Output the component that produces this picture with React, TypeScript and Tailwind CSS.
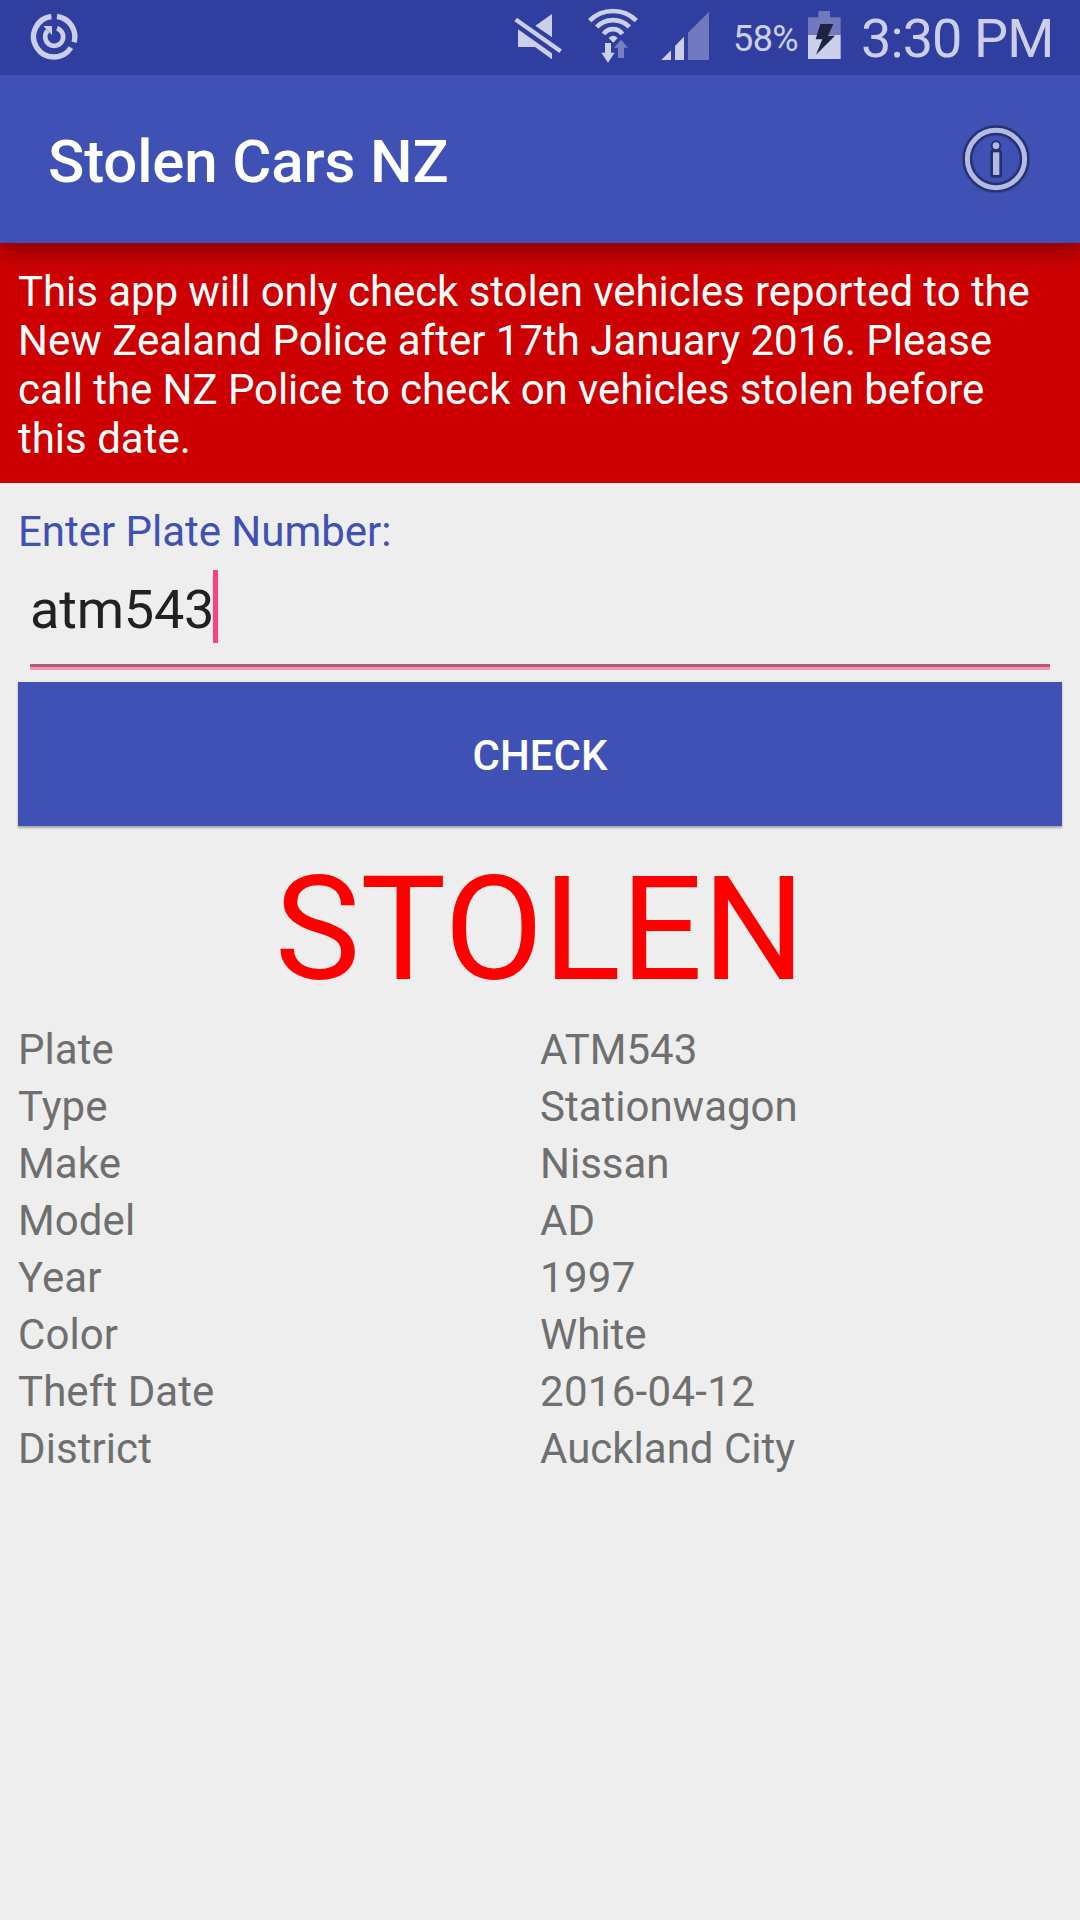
const rows = [
  ['Plate', 'ATM543'],
  ['Type', 'Stationwagon'],
  ['Make', 'Nissan'],
  ['Model', 'AD'],
  ['Year', '1997'],
  ['Color', 'White'],
  ['Theft Date', '2016-04-12'],
  ['District', 'Auckland City'],
];

function SyncIcon() {
  return (
    <svg className="ml-[30px] h-[75px] w-[48px]" viewBox="90 0 144 225" fill="none" stroke="currentColor">
      <path d="M171 49.5A61 61 0 0 1 222 127M213 143A61 61 0 1 1 154 49.5" strokeWidth="16" />
      <path d="M171 85A27 27 0 1 1 143 92" strokeWidth="14" />
      <path d="M130 78H156V105Z" fill="currentColor" stroke="none" />
    </svg>
  );
}

function MuteIcon() {
  return (
    <svg className="ml-[436px] h-[75px] w-[49px]" viewBox="42 0 147 225" fill="currentColor">
      <path d="M54 88 156 160V178L105 141H54ZM106 77 156 42V112Z" />
      <path d="M47 58.5 182 153.5" stroke="currentColor" strokeWidth="13" />
    </svg>
  );
}

function WifiIcon() {
  return (
    <svg className="ml-[25px] h-[75px] w-[50px]" viewBox="264 0 150 225" fill="currentColor">
      <g fill="none" stroke="currentColor" strokeWidth="14">
        <path d="M269 62A99 99 0 0 1 409 62" />
        <path d="M290 81A68 68 0 0 1 388 81" />
        <path d="M311 102A34 34 0 0 1 367 102" />
      </g>
      <path d="M326 114Q339 101 353 114L340 128Z" />
      <path d="M315 129H333V158H344L324 188 304 158H315Z" />
      <path d="M354 174V143H342L363 119 384 143H372V174Z" fill="#7880be" />
    </svg>
  );
}

function SignalIcon() {
  return (
    <svg className="ml-[23px] h-[75px] w-[49px]" viewBox="483 0 147 225" fill="currentColor">
      <path d="M484 180 513 151V180ZM525 180V138L552 110V180Z" />
      <path d="M564 180V98L627 35V180Z" fill="#6f79bb" />
    </svg>
  );
}

function BatteryIcon() {
  return (
    <svg className="h-[75px] w-[33px] shrink-0" viewBox="294 0 99 225" fill="currentColor">
      <path d="M325 33H360V52H392V105H294V52H325Z" fill="#7079bb" />
      <path d="M294 105H392V177H294Z" />
      <path d="M331 72H370L354 107H375L318 164 337 118H317Z" fill="#1b2440" />
    </svg>
  );
}

function StatusBar() {
  return (
    <div className="z-20 flex h-[75px] shrink-0 items-center bg-[#303f9f] text-[#cbcfe9]">
      <SyncIcon />
      <MuteIcon />
      <WifiIcon />
      <SignalIcon />
      <span className="ml-[23px] w-[75px] whitespace-nowrap pt-[2px] text-[36px] leading-none tracking-[-0.6px]">58%</span>
      <BatteryIcon />
      <span className="ml-[20px] whitespace-nowrap pt-[2px] text-[54px] leading-none tracking-[-0.9px]">3:30 PM</span>
    </div>
  );
}

function InfoIcon() {
  return (
    <svg className="size-[72px]" viewBox="60 38 216 216" fill="none">
      <g stroke="#26306f">
        <circle cx="168" cy="146" r="86" strokeWidth="33" opacity=".45" />
        <circle cx="168" cy="146" r="86" strokeWidth="27" />
        <circle cx="168" cy="106" r="10" strokeWidth="12" />
        <path d="M158 125H179V195H158Z" strokeWidth="14" strokeLinejoin="round" />
      </g>
      <circle cx="168" cy="146" r="86" stroke="#b4bbe0" strokeWidth="15" />
      <circle cx="168" cy="106" r="10" fill="#b4bbe0" />
      <path d="M159 126H178V194H159Z" fill="#b4bbe0" />
    </svg>
  );
}

export default function App() {
  return (
    <main className="flex h-[1920px] w-[1080px] flex-col overflow-hidden bg-[#eeeeee] font-['Roboto',sans-serif]">
      <StatusBar />
      <header className="z-10 flex h-[168px] shrink-0 items-center justify-between bg-[#3f51b5] px-12 text-white shadow-[0_10px_20px_rgba(0,0,0,0.3)]">
        <h1 className="pt-[5px] text-[60px] font-medium tracking-[-0.15px]">Stolen Cars NZ</h1>
        <InfoIcon />
      </header>
      <section className="flex h-[240px] shrink-0 flex-col whitespace-nowrap bg-[#cc0000] px-[18px] pt-[24px] text-[42px] leading-[49px] text-white">
        <span className="tracking-[-0.065px]">This app will only check stolen vehicles reported to the </span>
        <span>New Zealand Police after 17th January 2016. Please </span>
        <span className="tracking-[-0.075px]">call the NZ Police to check on vehicles stolen before </span>
        <span>this date.</span>
      </section>
      <label className="mt-[24px] px-[18px] text-[42px] leading-[49px] tracking-[-0.03px] text-[#3f51b5]">Enter Plate Number:</label>
      <div className="mx-[30px] mt-[14px] flex h-[73px] shrink-0 text-[54px] leading-[79px] text-[#212121]">
        <span className="w-[183px] tracking-[-0.2px]">atm543</span>
        <span className="w-[5px] bg-[#ff4081]" />
      </div>
      <div className="mx-[30px] mt-[21px] h-[6px] shrink-0 border-t-[3px] border-[#b15976] bg-[#f795b8]" />
      <button className="mx-[18px] mt-[12px] h-[144px] shrink-0 bg-[#3f51b5] pt-[2px] text-[42px] font-medium text-white shadow-[0_2px_2px_rgba(0,0,0,0.3)]">CHECK</button>
      <h2 className="mt-[19px] text-center text-[144px] leading-[169px] text-[#ff0000]">STOLEN</h2>
      <dl className="mx-[18px] mt-[11px]">
        {rows.map(([label, value]) => (
          <div key={label} className="grid h-[57px] grid-cols-2 text-[42px] leading-[49px] text-[#6f6f6f]">
            <dt className="tracking-[0.08px]">{label}</dt>
            <dd className={/^\d/.test(value) ? 'tracking-[0.3px]' : ''}>{value}</dd>
          </div>
        ))}
      </dl>
    </main>
  );
}
